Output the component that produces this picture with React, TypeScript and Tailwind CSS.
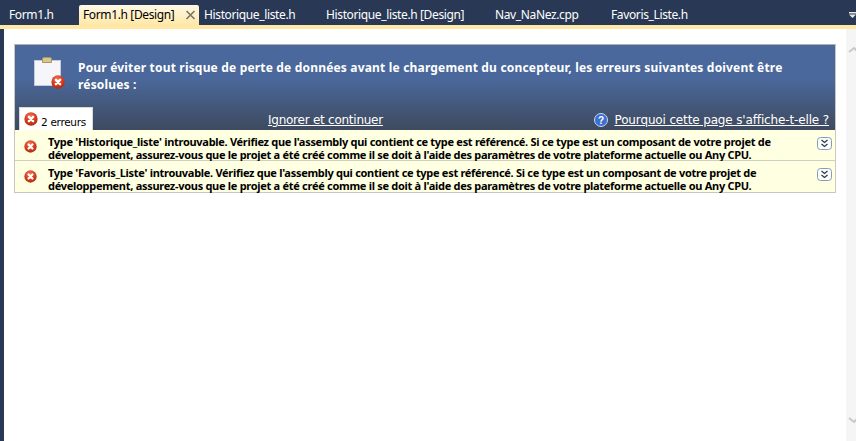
import React from "react";

function ErrIcon({ size = 15 }: { size?: number }) {
  return (
    <svg width={size} height={size} viewBox="0 0 16 16" className="shrink-0">
      <defs>
        <radialGradient id="eg" cx="45%" cy="30%" r="75%">
          <stop offset="0%" stopColor="#f0785a" />
          <stop offset="55%" stopColor="#d83a1c" />
          <stop offset="100%" stopColor="#a82a10" />
        </radialGradient>
      </defs>
      <circle cx="8" cy="8" r="7.6" fill="url(#eg)" />
      <path d="M5.6 5.6 L10.4 10.4 M10.4 5.6 L5.6 10.4" stroke="#fff" strokeWidth="2.8" strokeLinecap="round" />
    </svg>
  );
}

function Chevron() {
  return (
    <svg width="15" height="13" viewBox="0 0 15 13" className="shrink-0">
      <rect x="0.5" y="0.5" width="14" height="12" rx="3" fill="#fdfdf6" stroke="#7f9cc4" />
      <path d="M4.5 3 L7.5 5.5 L10.5 3 M4.5 7 L7.5 9.5 L10.5 7" fill="none" stroke="#2b3a55" strokeWidth="1.3" />
    </svg>
  );
}

const tabs = [
  { t: "Form1.h", w: "w-[79px] pl-[9px]" },
  { t: "Form1.h [Design]", w: "w-[120px] pl-[4px]", active: true },
  { t: "Historique_liste.h", w: "w-[127px] pl-[5px]" },
  { t: "Historique_liste.h [Design]", w: "w-[169px] pl-0" },
  { t: "Nav_NaNez.cpp", w: "w-[116px] pl-0" },
  { t: "Favoris_Liste.h", w: "w-[125px] pl-0" },
];

function Row({ name, last }: { name: string; last?: boolean }) {
  return (
    <div className={`flex h-[31px] bg-[#ffffe1] pl-[9px] pr-[3px] ${last ? "" : "border-b border-[#d0d0c0]"}`}>
      <div className={`${last ? "pt-[9px]" : "pt-[10px]"} mr-[11px]`}><ErrIcon size={13} /></div>
      <div className="flex-1 pt-[5px] font-bold text-[11px] leading-[13px] text-black font-['Noto_Sans',sans-serif] tracking-[-0.29px] whitespace-nowrap">
        Type '{name}' introuvable. Vérifiez que l'assembly qui contient ce type est référencé. Si ce type est un composant de votre projet de
        <br />
        développement, assurez-vous que le projet a été créé comme il se doit à l'aide des paramètres de votre plateforme actuelle ou Any CPU.
      </div>
      <div className="pt-[7px]"><Chevron /></div>
    </div>
  );
}

export default function App() {
  return (
    <div className="w-[856px] h-[441px] overflow-hidden bg-[#293955] flex flex-col font-['Noto_Sans',sans-serif]">
      <div className="flex h-[25px] shrink-0 pt-[5px] items-stretch">
        {tabs.map((x) => (
          <div key={x.t} className={`${x.w} shrink-0 text-[12px] leading-[20px] tracking-[-0.37px] flex whitespace-nowrap ${x.active ? "rounded-t-[2px] bg-gradient-to-b from-[#fff8e6] to-[#ffe8a6] text-black justify-between pr-[2px]" : "text-white"}`}>
            <span>{x.t}</span>
            {x.active && (
              <svg width="11" height="20" viewBox="0 0 11 20" className="mr-[1px]">
                <path d="M1.5 6 L9.5 14 M9.5 6 L1.5 14" stroke="#7a7660" strokeWidth="1.6" />
              </svg>
            )}
          </div>
        ))}
        <div className="flex-1 flex justify-end pt-[7px]">
          <svg width="7" height="6" viewBox="0 0 7 6"><path d="M0 0H7V1.5H0Z M0 2.5H7L3.5 6Z" fill="#e8e8e8" /></svg>
        </div>
      </div>
      <div className="h-[4px] shrink-0 bg-[#ffe8a6]" />
      <div className="flex-1 flex ml-[4px] bg-white">
        <div className="flex-1 pt-[15px] pl-[10px] pr-[10px]">
          <div className="flex flex-col w-[822px] border border-[#c8c8c0] border-t-[#b0b0b0]">
            <div className="h-[85px] flex flex-col bg-gradient-to-b from-[#4a689b] from-40% to-[#3e4a5f]">
              <div className="flex h-[56px] shrink-0">
                <div className="relative w-[31px] h-[31px] ml-[19px] mt-[12px] shrink-0">
                  <div className="absolute left-0 top-[3px] w-[27px] h-[26px] bg-[#f6f6fa] border border-[#c4cad8]" />
                  <div className="absolute left-[8px] top-0 w-[10px] h-[6px] bg-[#d8c88c] border border-[#a89860] rounded-t-[2px]" />
                  <div className="absolute left-[17px] top-[18px]"><ErrIcon size={14} /></div>
                </div>
                <div className="ml-[13px] pt-[14px] text-white font-bold text-[12px] leading-[17px] font-['Noto_Sans',sans-serif] tracking-[0.18px] whitespace-nowrap">
                  Pour éviter tout risque de perte de données avant le chargement du concepteur, les erreurs suivantes doivent être
                  <br />
                  résolues :
                </div>
              </div>
              <div className="flex-1 flex items-end pl-[4px] pr-[6px] text-white">
                <div className="w-[74px] h-[23px] bg-white text-black flex items-start pl-[4px] gap-[3px] border border-[#d8d8d8] border-b-0">
                  <div className="mt-[4px]"><ErrIcon size={14} /></div>
                  <span className="text-[10.5px] leading-[20px] mt-[4px] font-['DejaVu_Sans',sans-serif] tracking-[-0.3px] whitespace-nowrap">2 erreurs</span>
                </div>
                <span className="ml-[175px] mb-[2px] underline text-[12px] leading-[16px] font-['DejaVu_Sans',sans-serif] tracking-[-0.25px] whitespace-nowrap">Ignorer et continuer</span>
                <div className="ml-auto flex items-center gap-[6px] mb-[2px]">
                  <svg width="14" height="14" viewBox="0 0 14 14">
                    <circle cx="7" cy="7" r="6.5" fill="#3b6fd0" stroke="#c8d8f0" />
                    <text x="7" y="10.5" textAnchor="middle" fontSize="10" fontWeight="700" fill="#fff" fontFamily="'Liberation Sans',sans-serif">?</text>
                  </svg>
                  <span className="underline text-[12px] leading-[16px] font-['DejaVu_Sans',sans-serif] tracking-[-0.14px] whitespace-nowrap">Pourquoi cette page s'affiche-t-elle ?</span>
                </div>
              </div>
            </div>
            <Row name="Historique_liste" />
            <Row name="Favoris_Liste" last />
          </div>
        </div>
        <div className="w-[10px] bg-[#f5f5f5] flex flex-col justify-between items-end pt-[17px] pb-[17px]">
          <svg width="8" height="9" viewBox="0 0 8 9"><path d="M1 6 L6 2 L10 6" fill="none" stroke="#c8c8c8" strokeWidth="2" /></svg>
          <svg width="8" height="9" viewBox="0 0 8 9"><path d="M1 3 L6 7 L10 3" fill="none" stroke="#c8c8c8" strokeWidth="2" /></svg>
        </div>
      </div>
    </div>
  );
}
